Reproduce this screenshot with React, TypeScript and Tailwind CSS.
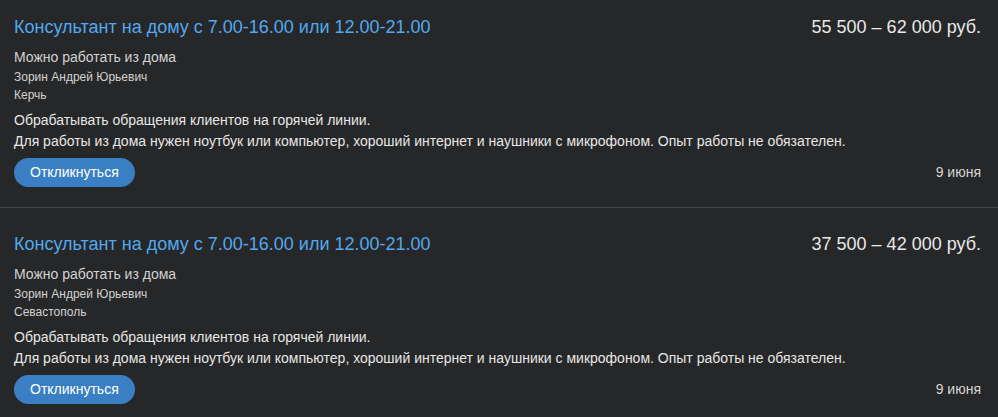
const vacancies = [
  {
    title: "Консультант на дому с 7.00-16.00 или 12.00-21.00",
    salary: "55 500 – 62 000 руб.",
    schedule: "Можно работать из дома",
    employer: "Зорин Андрей Юрьевич",
    city: "Керчь",
    date: "9 июня",
  },
  {
    title: "Консультант на дому с 7.00-16.00 или 12.00-21.00",
    salary: "37 500 – 42 000 руб.",
    schedule: "Можно работать из дома",
    employer: "Зорин Андрей Юрьевич",
    city: "Севастополь",
    date: "9 июня",
  },
];

type Vacancy = (typeof vacancies)[number];

function VacancyCard({ v }: { v: Vacancy }) {
  return (
    <div className="border-b border-[#454545] pb-5 pl-[14px] pr-[17px] pt-6">
      {/* Header */}
      <div className="flex items-start justify-between">
        <a className="text-[18px] leading-6 text-[#52a8ee]">{v.title}</a>
        <span className="text-[18px] leading-6 text-[#e8e8e8]">{v.salary}</span>
      </div>

      <p className="mt-2 text-[14px] leading-[21px] text-[#d2d2d2]">{v.schedule}</p>
      <p className="text-[12px] leading-[18px] text-[#d2d2d2]">{v.employer}</p>
      <p className="text-[12px] leading-[18px] text-[#d2d2d2]">{v.city}</p>

      {/* Description */}
      <div className="mt-[6px] text-[14px] leading-[21px] text-[#e6e6e6]">
        <p>Обрабатывать обращения клиентов на горячей линии.</p>
        <p>
          Для работы из дома нужен ноутбук или компьютер, хороший интернет и наушники с
          микрофоном. Опыт работы не обязателен.
        </p>
      </div>

      <div className="mt-[6px] flex items-center justify-between">
        <button
          type="button"
          className="h-[29px] rounded-full bg-[#3a7fc3] px-4 text-[14px] text-white"
        >
          Откликнуться
        </button>
        <span className="text-[14px] text-[#d6d6d6]">{v.date}</span>
      </div>
    </div>
  );
}

export default function App() {
  return (
    <div
      className="h-[417px] w-[998px] overflow-hidden bg-[#262728]"
      style={{ fontFamily: '"Liberation Sans", Arial, sans-serif' }}
    >
      <div className="-mt-[9px]">
        {vacancies.map((v, i) => (
          <VacancyCard key={i} v={v} />
        ))}
      </div>
    </div>
  );
}
